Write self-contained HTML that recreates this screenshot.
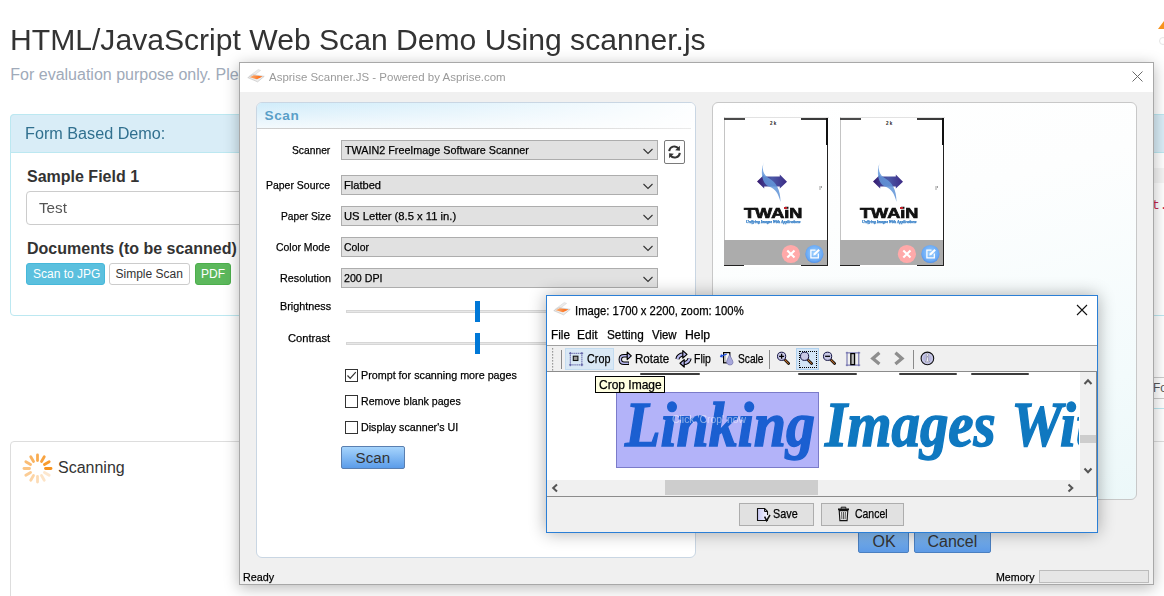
<!DOCTYPE html>
<html><head><meta charset="utf-8"><title>Web Scan Demo</title>
<style>
html,body{margin:0;padding:0;}
body{width:1164px;height:596px;position:relative;overflow:hidden;background:#fff;font-family:'Liberation Sans',sans-serif;}
.a{position:absolute;box-sizing:border-box;}
.t{position:absolute;white-space:nowrap;}
svg.a{overflow:visible;}
</style></head><body>

<div class="t" style="left:9.790776593430497px;top:25.00px;font-size:30.0px;line-height:30.0px;color:#333;font-family:'Liberation Sans';transform:scale(1.0038,1);transform-origin:0 25px;">HTML/JavaScript Web Scan Demo Using scanner.js</div>
<div class="t" style="left:10.3px;top:67.00px;font-size:16.0px;line-height:16.0px;color:#a0aab9;font-family:'Liberation Sans';">For evaluation purpose only. Please contact us for a license.</div>
<div class="a" style="left:10px;top:114px;width:1300px;height:202px;border:1px solid #bce8f1;border-radius:4px;background:#fff;"></div>
<div class="a" style="left:10px;top:114px;width:1300px;height:39px;border:1px solid #bce8f1;border-radius:4px 4px 0 0;background:#d9edf7;"></div>
<div class="t" style="left:25.2051206592113px;top:126.00px;font-size:16.0px;line-height:16.0px;color:#31708f;font-family:'Liberation Sans';transform:scale(1.0116,1);transform-origin:0 13px;">Form Based Demo:</div>
<div class="t" style="left:27px;top:169.00px;font-size:16px;line-height:16px;color:#333;font-family:'Liberation Sans';font-weight:bold;">Sample Field 1</div>
<div class="a" style="left:26px;top:191px;width:600px;height:34px;border:1px solid #ccc;border-radius:4px;background:#fff;"></div>
<div class="t" style="left:38.895290858725765px;top:201.00px;font-size:14.0px;line-height:14.0px;color:#555;font-family:'Liberation Sans';transform:scale(1.0882,1);transform-origin:0 12px;">Test</div>
<div class="t" style="left:27px;top:241.00px;font-size:16px;line-height:16px;color:#333;font-family:'Liberation Sans';font-weight:bold;">Documents (to be scanned)</div>
<div class="a" style="left:26px;top:263px;width:79px;height:22px;background:#5bc0de;border:1px solid #46b8da;border-radius:3px;"></div>
<div class="t" style="left:33px;top:268.00px;font-size:12px;line-height:12px;color:#fff;font-family:'Liberation Sans';">Scan to JPG</div>
<div class="a" style="left:109px;top:263px;width:81px;height:22px;background:#fff;border:1px solid #ccc;border-radius:3px;"></div>
<div class="t" style="left:115.5px;top:268.00px;font-size:12px;line-height:12px;color:#333;font-family:'Liberation Sans';">Simple Scan</div>
<div class="a" style="left:195px;top:263px;width:36px;height:22px;background:#5cb85c;border:1px solid #4cae4c;border-radius:3px;"></div>
<div class="t" style="left:201px;top:268.00px;font-size:12px;line-height:12px;color:#fff;font-family:'Liberation Sans';">PDF</div>
<div class="a" style="left:10px;top:441px;width:1300px;height:200px;border:1px solid #ddd;border-radius:4px;background:#fff;"></div>
<svg class="a" style="left:22.9px;top:453.8px;" width="29" height="29" viewBox="0 0 29 29"><line x1="22.50" y1="14.50" x2="28.00" y2="14.50" stroke="#f7931e" stroke-opacity="1.00" stroke-width="2.8" stroke-linecap="round"/><line x1="21.43" y1="10.50" x2="26.19" y2="7.75" stroke="#f7931e" stroke-opacity="0.93" stroke-width="2.8" stroke-linecap="round"/><line x1="18.50" y1="7.57" x2="21.25" y2="2.81" stroke="#f7931e" stroke-opacity="0.85" stroke-width="2.8" stroke-linecap="round"/><line x1="14.50" y1="6.50" x2="14.50" y2="1.00" stroke="#f7931e" stroke-opacity="0.78" stroke-width="2.8" stroke-linecap="round"/><line x1="10.50" y1="7.57" x2="7.75" y2="2.81" stroke="#f7931e" stroke-opacity="0.70" stroke-width="2.8" stroke-linecap="round"/><line x1="7.57" y1="10.50" x2="2.81" y2="7.75" stroke="#f7931e" stroke-opacity="0.62" stroke-width="2.8" stroke-linecap="round"/><line x1="6.50" y1="14.50" x2="1.00" y2="14.50" stroke="#f7931e" stroke-opacity="0.55" stroke-width="2.8" stroke-linecap="round"/><line x1="7.57" y1="18.50" x2="2.81" y2="21.25" stroke="#f7931e" stroke-opacity="0.47" stroke-width="2.8" stroke-linecap="round"/><line x1="10.50" y1="21.43" x2="7.75" y2="26.19" stroke="#f7931e" stroke-opacity="0.40" stroke-width="2.8" stroke-linecap="round"/><line x1="14.50" y1="22.50" x2="14.50" y2="28.00" stroke="#f7931e" stroke-opacity="0.33" stroke-width="2.8" stroke-linecap="round"/><line x1="18.50" y1="21.43" x2="21.25" y2="26.19" stroke="#f7931e" stroke-opacity="0.25" stroke-width="2.8" stroke-linecap="round"/><line x1="21.43" y1="18.50" x2="26.19" y2="21.25" stroke="#f7931e" stroke-opacity="0.22" stroke-width="2.8" stroke-linecap="round"/></svg>
<div class="t" style="left:58px;top:460.00px;font-size:16px;line-height:16px;color:#333;font-family:'Liberation Sans';">Scanning</div>
<div class="a" style="left:1154px;top:114px;width:20px;height:39px;background:#d9edf7;border-top:1px solid #bce8f1;border-bottom:1px solid #bce8f1;"></div>
<div class="a" style="left:1154px;top:168px;width:20px;height:15px;background:#f5f5f5;"></div>
<div class="t" style="left:1152px;top:199.00px;font-size:13px;line-height:13px;color:#c7254e;font-family:'Liberation Mono';">t.</div>
<div class="a" style="left:1154px;top:377px;width:20px;height:1px;background:#ccc;"></div>
<div class="a" style="left:1154px;top:398px;width:20px;height:1px;background:#ccc;"></div>
<div class="t" style="left:1153px;top:382.00px;font-size:12px;line-height:12px;color:#555;font-family:'Liberation Sans';">Fo</div>
<div class="a" style="left:1154px;top:408px;width:20px;height:1px;background:#bce8f1;"></div>
<svg class="a" style="left:1157px;top:20px;" width="8" height="10" viewBox="0 0 8 10"><path d="M1 9 L7 9 L7 1 Z" fill="#f7931e"/></svg>
<svg class="a" style="left:1158px;top:37px;" width="8" height="8" viewBox="0 0 8 8"><circle cx="5" cy="4" r="3.5" fill="none" stroke="#e5e5e5"/></svg>
<div class="a" style="left:239px;top:62px;width:915px;height:523px;border:1px solid #a8a8a8;background:#f0f0f0;box-shadow:0 3px 14px rgba(0,0,0,0.28);"></div>
<div class="a" style="left:240px;top:63px;width:913px;height:29px;background:#fff;"></div>
<svg class="a" style="left:244px;top:66px;" width="24" height="22" viewBox="0 0 24 22"><defs><linearGradient id="og1" x1="0" x2="1"><stop offset="0" stop-color="#f9b27a"/><stop offset="1" stop-color="#ff5e00"/></linearGradient></defs><path d="M5.2 10.2 L14.2 3.6 L16.6 4.4 L8.2 10.8 Z" fill="#ececec" stroke="#d6d6d6" stroke-width="0.6"/><path d="M3.8 11.6 L9 8.6 L20.2 10.4 L13.6 15.8 Z" fill="#eeeeee" stroke="#c4c4c4" stroke-width="0.7"/><path d="M5.6 11.2 L9.6 9.2 L18.6 10.4 L13 13.2 Z" fill="url(#og1)"/></svg>
<div class="t" style="left:269.3px;top:72.00px;font-size:11.8px;line-height:11.8px;color:#9a9a9a;font-family:'Liberation Sans';transform:scale(0.9728,1);transform-origin:0 9px;">Asprise Scanner.JS - Powered by Asprise.com</div>
<svg class="a" style="left:1131px;top:70px;" width="13" height="13" viewBox="0 0 13 13"><path d="M1.5 1.5 L11.5 11.5 M11.5 1.5 L1.5 11.5" stroke="#6a6a6a" stroke-width="1"/></svg>
<div class="a" style="left:256px;top:102px;width:440px;height:456px;border:1px solid #c9d6e3;border-radius:6px;background:#fff;overflow:hidden;"></div>
<div class="a" style="left:257px;top:103px;width:438px;height:26px;background:linear-gradient(90deg,rgba(255,255,255,0) 0%,rgba(255,255,255,0.35) 45%,rgba(255,255,255,0.95) 100%),linear-gradient(#d0ecfa,#f5fafd);border-radius:5px 5px 0 0;"></div>
<div class="a" style="left:257px;top:128px;width:434px;height:1px;background:linear-gradient(90deg,#cdcdcd,#d6d6d6 60%,#eaeaea);"></div>
<div class="t" style="left:264.5px;top:109.00px;font-size:13.6px;line-height:13.6px;color:#5a9fc8;font-family:'Liberation Sans';font-weight:bold;letter-spacing:0.6px;">Scan</div>
<div class="t" style="left:291.93770491803275px;top:145.00px;font-size:11.5px;line-height:11.5px;color:#000;font-family:'Liberation Sans';transform:scale(0.8933,1);transform-origin:0 9px;-webkit-text-stroke:0.25px #000;">Scanner</div>
<div class="a" style="left:341px;top:140px;width:317px;height:20px;background:#e1e1e1;border:1px solid #adadad;"></div>
<div class="t" style="left:344.5848049281314px;top:145.00px;font-size:11.5px;line-height:11.5px;color:#000;font-family:'Liberation Sans';transform:scale(0.9356,1);transform-origin:0 9px;-webkit-text-stroke:0.25px #000;">TWAIN2 FreeImage Software Scanner</div>
<svg class="a" style="left:642px;top:148px;" width="12" height="7" viewBox="0 0 12 7"><path d="M1.5 1 L6 5.5 L10.5 1" fill="none" stroke="#333" stroke-width="1.1"/></svg>
<div class="t" style="left:266.4626043405676px;top:180.00px;font-size:11.5px;line-height:11.5px;color:#000;font-family:'Liberation Sans';transform:scale(0.9102,1);transform-origin:0 9px;-webkit-text-stroke:0.25px #000;">Paper Source</div>
<div class="a" style="left:341px;top:175px;width:317px;height:20px;background:#e1e1e1;border:1px solid #adadad;"></div>
<div class="t" style="left:343.91222570532915px;top:180.00px;font-size:11.5px;line-height:11.5px;color:#000;font-family:'Liberation Sans';transform:scale(0.9650,1);transform-origin:0 9px;-webkit-text-stroke:0.25px #000;">Flatbed</div>
<svg class="a" style="left:642px;top:183px;" width="12" height="7" viewBox="0 0 12 7"><path d="M1.5 1 L6 5.5 L10.5 1" fill="none" stroke="#333" stroke-width="1.1"/></svg>
<div class="t" style="left:280.5840503672613px;top:211.00px;font-size:11.5px;line-height:11.5px;color:#000;font-family:'Liberation Sans';transform:scale(0.8869,1);transform-origin:0 9px;-webkit-text-stroke:0.25px #000;">Paper Size</div>
<div class="a" style="left:341px;top:206px;width:317px;height:20px;background:#e1e1e1;border:1px solid #adadad;"></div>
<div class="t" style="left:343.9571065989848px;top:211.00px;font-size:11.5px;line-height:11.5px;color:#000;font-family:'Liberation Sans';transform:scale(0.9773,1);transform-origin:0 9px;-webkit-text-stroke:0.25px #000;">US Letter (8.5 x 11 in.)</div>
<svg class="a" style="left:642px;top:214px;" width="12" height="7" viewBox="0 0 12 7"><path d="M1.5 1 L6 5.5 L10.5 1" fill="none" stroke="#333" stroke-width="1.1"/></svg>
<div class="t" style="left:276.4778325123153px;top:242.00px;font-size:11.5px;line-height:11.5px;color:#000;font-family:'Liberation Sans';transform:scale(0.9081,1);transform-origin:0 9px;-webkit-text-stroke:0.25px #000;">Color Mode</div>
<div class="a" style="left:341px;top:237px;width:317px;height:20px;background:#e1e1e1;border:1px solid #adadad;"></div>
<div class="t" style="left:344.2784482758621px;top:242.00px;font-size:11.5px;line-height:11.5px;color:#000;font-family:'Liberation Sans';transform:scale(0.9070,1);transform-origin:0 9px;-webkit-text-stroke:0.25px #000;">Color</div>
<svg class="a" style="left:642px;top:245px;" width="12" height="7" viewBox="0 0 12 7"><path d="M1.5 1 L6 5.5 L10.5 1" fill="none" stroke="#333" stroke-width="1.1"/></svg>
<div class="t" style="left:279.73711790393014px;top:273.00px;font-size:11.5px;line-height:11.5px;color:#000;font-family:'Liberation Sans';transform:scale(0.9379,1);transform-origin:0 9px;-webkit-text-stroke:0.25px #000;">Resolution</div>
<div class="a" style="left:341px;top:268px;width:317px;height:20px;background:#e1e1e1;border:1px solid #adadad;"></div>
<div class="t" style="left:344.26685878962536px;top:273.00px;font-size:11.5px;line-height:11.5px;color:#000;font-family:'Liberation Sans';transform:scale(0.9272,1);transform-origin:0 9px;-webkit-text-stroke:0.25px #000;">200 DPI</div>
<svg class="a" style="left:642px;top:276px;" width="12" height="7" viewBox="0 0 12 7"><path d="M1.5 1 L6 5.5 L10.5 1" fill="none" stroke="#333" stroke-width="1.1"/></svg>
<div class="a" style="left:664px;top:140px;width:21px;height:24px;background:#fdfdfd;border:1px solid #7a7a7a;border-radius:2px;"></div>
<svg class="a" style="left:666px;top:144px;" width="17" height="16" viewBox="0 0 17 16"><path d="M3.2 7.2 A5.2 5.2 0 0 1 12.6 4.6" fill="none" stroke="#333" stroke-width="2"/><path d="M13.9 1.8 L13.9 6.8 L9.2 6.2 Z" fill="#333"/><path d="M13.8 8.8 A5.2 5.2 0 0 1 4.4 11.4" fill="none" stroke="#333" stroke-width="2"/><path d="M3.1 14.2 L3.1 9.2 L7.8 9.8 Z" fill="#333"/></svg>
<div class="t" style="left:279.6357917570499px;top:301.00px;font-size:11.5px;line-height:11.5px;color:#000;font-family:'Liberation Sans';transform:scale(0.9394,1);transform-origin:0 9px;-webkit-text-stroke:0.25px #000;">Brightness</div>
<div class="t" style="left:288.2422043010753px;top:333.00px;font-size:11.5px;line-height:11.5px;color:#000;font-family:'Liberation Sans';transform:scale(0.9701,1);transform-origin:0 9px;-webkit-text-stroke:0.25px #000;">Contrast</div>
<div class="a" style="left:346px;top:310px;width:360px;height:3px;background:#e7e7e7;border:1px solid #d6d6d6;"></div>
<div class="a" style="left:346px;top:342px;width:360px;height:3px;background:#e7e7e7;border:1px solid #d6d6d6;"></div>
<div class="a" style="left:475px;top:301px;width:5px;height:21px;background:#0078d7;"></div>
<div class="a" style="left:475px;top:333px;width:5px;height:21px;background:#0078d7;"></div>
<div class="a" style="left:345px;top:369px;width:13px;height:13px;background:#fff;border:1px solid #333;"></div>
<div class="t" style="left:360.84025703369224px;top:370.00px;font-size:11.5px;line-height:11.5px;color:#000;font-family:'Liberation Sans';transform:scale(0.9345,1);transform-origin:0 9px;-webkit-text-stroke:0.25px #000;">Prompt for scanning more pages</div>
<div class="a" style="left:345px;top:395px;width:13px;height:13px;background:#fff;border:1px solid #333;"></div>
<div class="t" style="left:360.8508620689655px;top:396.00px;font-size:11.5px;line-height:11.5px;color:#000;font-family:'Liberation Sans';transform:scale(0.9230,1);transform-origin:0 9px;-webkit-text-stroke:0.25px #000;">Remove blank pages</div>
<div class="a" style="left:345px;top:421px;width:13px;height:13px;background:#fff;border:1px solid #333;"></div>
<div class="t" style="left:360.84343434343435px;top:422.00px;font-size:11.5px;line-height:11.5px;color:#000;font-family:'Liberation Sans';transform:scale(0.9310,1);transform-origin:0 9px;-webkit-text-stroke:0.25px #000;">Display scanner's UI</div>
<svg class="a" style="left:345px;top:369px;" width="13" height="13" viewBox="0 0 13 13"><path d="M2.5 6.5 L5.2 9.4 L10.8 3.2" fill="none" stroke="#333" stroke-width="1.2"/></svg>
<div class="a" style="left:341px;top:446px;width:64px;height:23px;background:linear-gradient(#a6d4fc,#5b9ce9);border:1px solid #5a7fb0;border-radius:2px;"></div>
<div class="t" style="left:355.5px;top:450.00px;font-size:15.2px;line-height:15.2px;color:#333;font-family:'Liberation Sans';">Scan</div>
<div class="a" style="left:712px;top:102px;width:425px;height:398px;border:1px solid #c8c8c8;border-radius:6px;background:linear-gradient(165deg,#ffffff 0%,#fdfefe 30%,#f3fbfc 75%,#ecf8f9 100%);"></div>
<div class="a" style="left:723.5px;top:117.5px;width:105px;height:149px;background:#fff;"></div>
<div class="a" style="left:723.5px;top:117px;width:105px;height:1px;background:#e2e2e2;"></div>
<div class="a" style="left:723.5px;top:117px;width:1px;height:149px;background:#c4c4c4;"></div>
<div class="a" style="left:724.0px;top:118px;width:21px;height:1.5px;background:#4a4a4a;"></div>
<div class="a" style="left:801.0px;top:118px;width:27px;height:1.5px;background:#3a3a3a;"></div>
<div class="a" style="left:826.3px;top:118px;width:2px;height:27px;background:#111;"></div>
<div class="a" style="left:826.7px;top:145px;width:1.6px;height:121px;background:#222;"></div>
<div class="a" style="left:724.0px;top:239.8px;width:103px;height:25.5px;background:#acacac;"></div>
<div class="a" style="left:724.0px;top:265px;width:20px;height:1.3px;background:#222;"></div>
<div class="a" style="left:801.0px;top:265px;width:27px;height:1.3px;background:#222;"></div>
<svg class="a" style="left:753.5px;top:159px;" width="36" height="46" viewBox="0 0 36 46"><defs><linearGradient id="ag" x1="0" x2="1" y1="0" y2="0"><stop offset="0" stop-color="#35186e"/><stop offset="0.5" stop-color="#4b5aa8"/><stop offset="1" stop-color="#3d2a85"/></linearGradient><linearGradient id="sg" x1="0" x2="0" y1="0" y2="1"><stop offset="0" stop-color="#6b9fe0"/><stop offset="1" stop-color="#5b8fd4"/></linearGradient></defs><path d="M3 22.5 L10.2 15.5 L10.2 17.6 L25.8 17.6 L25.8 15.5 L33 22.8 L25.8 29.6 L25.8 27.5 L10.2 27.5 L10.2 29.5 Z" fill="url(#ag)"/><path d="M10 3 C7.5 10 9 16 15.5 19.5 C22 23.5 26.5 30 26.5 43 C24.5 35 21.5 29.5 15 27.5 C8.5 25 5.5 14 10 3 Z" fill="url(#sg)" opacity="0.85"/></svg>
<div class="t" style="left:743.818759936407px;top:206.00px;font-size:14.0px;line-height:14.0px;color:#111;font-family:'Liberation Sans';font-weight:bold;-webkit-text-stroke:0.7px #111;transform:scale(1.2946,1);transform-origin:0 12px;">TWAiN</div>
<div class="a" style="left:783.5px;top:206.5px;width:3.5px;height:2.5px;background:#c0202a;"></div>
<div class="t" style="left:746.3996871741398px;top:220.00px;font-size:4.5px;line-height:4.5px;color:#2a78c4;font-family:'Liberation Serif';font-weight:bold;font-style:italic;-webkit-text-stroke:0.25px #2a78c4;transform:scale(0.8342,1);transform-origin:0 3px;">Unifying Images With Applications</div>
<div class="t" style="left:770.0px;top:122.00px;font-size:4.5px;line-height:4.5px;color:#222;font-family:'Liberation Sans';font-weight:bold;">2 k</div>
<svg class="a" style="left:818.5px;top:185px;" width="4" height="6" viewBox="0 0 4 6"><path d="M1 1 L1 5 M2.5 1 L2.5 3" stroke="#777" stroke-width="0.7"/></svg>
<svg class="a" style="left:781.0px;top:244.9px;" width="20" height="20" viewBox="0 0 20 20"><circle cx="9.9" cy="9" r="9.1" fill="#ffa9a9"/><path d="M6.3 5.4 L13.5 12.6 M13.5 5.4 L6.3 12.6" stroke="#fff" stroke-width="2.1"/></svg>
<svg class="a" style="left:804.5px;top:244.9px;" width="20" height="20" viewBox="0 0 20 20"><defs><radialGradient id="bg1" cx="0.5" cy="0.45" r="0.55"><stop offset="0" stop-color="#9fd2ff"/><stop offset="0.8" stop-color="#6aaaf6"/><stop offset="1" stop-color="#4f8ee8"/></radialGradient></defs><circle cx="9.4" cy="9" r="9.1" fill="url(#bg1)"/><path d="M10.5 5.2 L5.9 5.2 L5.9 12.8 L13.3 12.8 L13.3 8.5" fill="none" stroke="#fff" stroke-width="1.3"/><path d="M8.3 10.6 L8.7 8.5 L13.4 3.9 L14.9 5.4 L10.3 10.1 Z" fill="#fff"/></svg>
<div class="a" style="left:839.5px;top:117.5px;width:105px;height:149px;background:#fff;"></div>
<div class="a" style="left:839.5px;top:117px;width:105px;height:1px;background:#e2e2e2;"></div>
<div class="a" style="left:839.5px;top:117px;width:1px;height:149px;background:#c4c4c4;"></div>
<div class="a" style="left:840.0px;top:118px;width:21px;height:1.5px;background:#4a4a4a;"></div>
<div class="a" style="left:917.0px;top:118px;width:27px;height:1.5px;background:#3a3a3a;"></div>
<div class="a" style="left:942.3px;top:118px;width:2px;height:27px;background:#111;"></div>
<div class="a" style="left:942.7px;top:145px;width:1.6px;height:121px;background:#222;"></div>
<div class="a" style="left:840.0px;top:239.8px;width:103px;height:25.5px;background:#acacac;"></div>
<div class="a" style="left:840.0px;top:265px;width:20px;height:1.3px;background:#222;"></div>
<div class="a" style="left:917.0px;top:265px;width:27px;height:1.3px;background:#222;"></div>
<svg class="a" style="left:869.5px;top:159px;" width="36" height="46" viewBox="0 0 36 46"><defs><linearGradient id="ag" x1="0" x2="1" y1="0" y2="0"><stop offset="0" stop-color="#35186e"/><stop offset="0.5" stop-color="#4b5aa8"/><stop offset="1" stop-color="#3d2a85"/></linearGradient><linearGradient id="sg" x1="0" x2="0" y1="0" y2="1"><stop offset="0" stop-color="#6b9fe0"/><stop offset="1" stop-color="#5b8fd4"/></linearGradient></defs><path d="M3 22.5 L10.2 15.5 L10.2 17.6 L25.8 17.6 L25.8 15.5 L33 22.8 L25.8 29.6 L25.8 27.5 L10.2 27.5 L10.2 29.5 Z" fill="url(#ag)"/><path d="M10 3 C7.5 10 9 16 15.5 19.5 C22 23.5 26.5 30 26.5 43 C24.5 35 21.5 29.5 15 27.5 C8.5 25 5.5 14 10 3 Z" fill="url(#sg)" opacity="0.85"/></svg>
<div class="t" style="left:859.818759936407px;top:206.00px;font-size:14.0px;line-height:14.0px;color:#111;font-family:'Liberation Sans';font-weight:bold;-webkit-text-stroke:0.7px #111;transform:scale(1.2946,1);transform-origin:0 12px;">TWAiN</div>
<div class="a" style="left:899.5px;top:206.5px;width:3.5px;height:2.5px;background:#c0202a;"></div>
<div class="t" style="left:862.3996871741398px;top:220.00px;font-size:4.5px;line-height:4.5px;color:#2a78c4;font-family:'Liberation Serif';font-weight:bold;font-style:italic;-webkit-text-stroke:0.25px #2a78c4;transform:scale(0.8342,1);transform-origin:0 3px;">Unifying Images With Applications</div>
<div class="t" style="left:886.0px;top:122.00px;font-size:4.5px;line-height:4.5px;color:#222;font-family:'Liberation Sans';font-weight:bold;">2 k</div>
<svg class="a" style="left:934.5px;top:185px;" width="4" height="6" viewBox="0 0 4 6"><path d="M1 1 L1 5 M2.5 1 L2.5 3" stroke="#777" stroke-width="0.7"/></svg>
<svg class="a" style="left:897.0px;top:244.9px;" width="20" height="20" viewBox="0 0 20 20"><circle cx="9.9" cy="9" r="9.1" fill="#ffa9a9"/><path d="M6.3 5.4 L13.5 12.6 M13.5 5.4 L6.3 12.6" stroke="#fff" stroke-width="2.1"/></svg>
<svg class="a" style="left:920.5px;top:244.9px;" width="20" height="20" viewBox="0 0 20 20"><defs><radialGradient id="bg1" cx="0.5" cy="0.45" r="0.55"><stop offset="0" stop-color="#9fd2ff"/><stop offset="0.8" stop-color="#6aaaf6"/><stop offset="1" stop-color="#4f8ee8"/></radialGradient></defs><circle cx="9.4" cy="9" r="9.1" fill="url(#bg1)"/><path d="M10.5 5.2 L5.9 5.2 L5.9 12.8 L13.3 12.8 L13.3 8.5" fill="none" stroke="#fff" stroke-width="1.3"/><path d="M8.3 10.6 L8.7 8.5 L13.4 3.9 L14.9 5.4 L10.3 10.1 Z" fill="#fff"/></svg>
<div class="a" style="left:858px;top:530px;width:51px;height:23px;background:linear-gradient(#86bdf2,#5d9ae6);border:1px solid #4a7fc0;border-radius:2px;"></div>
<div class="t" style="left:872.5px;top:534.00px;font-size:16px;line-height:16px;color:#333;font-family:'Liberation Sans';">OK</div>
<div class="a" style="left:914px;top:530px;width:77px;height:23px;background:linear-gradient(#86bdf2,#5d9ae6);border:1px solid #4a7fc0;border-radius:2px;"></div>
<div class="t" style="left:927.5px;top:534.00px;font-size:16px;line-height:16px;color:#333;font-family:'Liberation Sans';">Cancel</div>
<div class="t" style="left:242.8373665480427px;top:572.00px;font-size:11.5px;line-height:11.5px;color:#000;font-family:'Liberation Sans';transform:scale(0.9376,1);transform-origin:0 9px;-webkit-text-stroke:0.25px #000;">Ready</div>
<div class="t" style="left:995.7478753541077px;top:572.00px;font-size:11.5px;line-height:11.5px;color:#000;font-family:'Liberation Sans';transform:scale(0.9262,1);transform-origin:0 9px;-webkit-text-stroke:0.25px #000;">Memory</div>
<div class="a" style="left:1039px;top:570px;width:110px;height:13px;background:#e6e6e6;border:1px solid #bcbcbc;"></div>
<div class="a" style="left:546px;top:295px;width:552px;height:238px;border:1px solid #2b7fd6;background:#f0f0f0;box-shadow:0 0 16px rgba(0,0,0,0.32);"></div>
<div class="a" style="left:547px;top:296px;width:550px;height:49px;background:#fff;"></div>
<div class="a" style="left:547px;top:345px;width:550px;height:1px;background:#a0a0a0;"></div>
<svg class="a" style="left:550px;top:299px;" width="24" height="22" viewBox="0 0 24 22"><defs><linearGradient id="og2" x1="0" x2="1"><stop offset="0" stop-color="#f9b27a"/><stop offset="1" stop-color="#ff5e00"/></linearGradient></defs><path d="M5.2 10.2 L14.2 3.6 L16.6 4.4 L8.2 10.8 Z" fill="#ececec" stroke="#d6d6d6" stroke-width="0.6"/><path d="M3.8 11.6 L9 8.6 L20.2 10.4 L13.6 15.8 Z" fill="#eeeeee" stroke="#c4c4c4" stroke-width="0.7"/><path d="M5.6 11.2 L9.6 9.2 L18.6 10.4 L13 13.2 Z" fill="url(#og2)"/></svg>
<div class="t" style="left:575.4840863115306px;top:306.00px;font-size:11.9px;line-height:11.9px;color:#000;font-family:'Liberation Sans';transform:scale(0.9486,1);transform-origin:0 9px;-webkit-text-stroke:0.25px #000;">Image: 1700 x 2200, zoom: 100%</div>
<svg class="a" style="left:1076px;top:304px;" width="12" height="12" viewBox="0 0 12 12"><path d="M1 1 L11 11 M11 1 L1 11" stroke="#111" stroke-width="1.1"/></svg>
<div class="t" style="left:550.657239057239px;top:330.00px;font-size:11.9px;line-height:11.9px;color:#000;font-family:'Liberation Sans';transform:scale(0.9903,1);transform-origin:0 9px;-webkit-text-stroke:0.25px #000;">File</div>
<div class="t" style="left:577.2409785932722px;top:330.00px;font-size:11.9px;line-height:11.9px;color:#000;font-family:'Liberation Sans';transform:scale(1.0074,1);transform-origin:0 9px;-webkit-text-stroke:0.25px #000;">Edit</div>
<div class="t" style="left:606.6690000000001px;top:330.00px;font-size:11.9px;line-height:11.9px;color:#000;font-family:'Liberation Sans';transform:scale(0.9916,1);transform-origin:0 9px;-webkit-text-stroke:0.25px #000;">Setting</div>
<div class="t" style="left:652.3428904428904px;top:330.00px;font-size:11.9px;line-height:11.9px;color:#000;font-family:'Liberation Sans';transform:scale(0.9598,1);transform-origin:0 9px;-webkit-text-stroke:0.25px #000;">View</div>
<div class="t" style="left:684.9201550387596px;top:330.00px;font-size:11.9px;line-height:11.9px;color:#000;font-family:'Liberation Sans';transform:scale(1.0292,1);transform-origin:0 9px;-webkit-text-stroke:0.25px #000;">Help</div>
<svg class="a" style="left:551px;top:347px;" width="4" height="24" viewBox="0 0 4 24"><rect x="1" y="1" width="1.2" height="1.6" fill="#9a9a9a"/><rect x="1" y="4" width="1.2" height="1.6" fill="#9a9a9a"/><rect x="1" y="7" width="1.2" height="1.6" fill="#9a9a9a"/><rect x="1" y="10" width="1.2" height="1.6" fill="#9a9a9a"/><rect x="1" y="13" width="1.2" height="1.6" fill="#9a9a9a"/><rect x="1" y="16" width="1.2" height="1.6" fill="#9a9a9a"/><rect x="1" y="19" width="1.2" height="1.6" fill="#9a9a9a"/><rect x="1" y="22" width="1.2" height="1.6" fill="#9a9a9a"/></svg>
<div class="a" style="left:561px;top:350px;width:1px;height:19px;background:#8a8a8a;"></div>
<div class="a" style="left:565px;top:348px;width:49px;height:22px;background:#d9e8f5;border:1px solid #c4dcf0;"></div>
<svg class="a" style="left:568px;top:351px;" width="16" height="16" viewBox="0 0 16 16"><rect x="2.3" y="2.3" width="11.6" height="11.6" fill="none" stroke="#6262a6" stroke-width="1" stroke-dasharray="1.4 0.5"/><path d="M1 2.3 L3.3 2.3 M2.3 1 L2.3 3.3 M12.9 2.3 L15.2 2.3 M13.9 1 L13.9 3.3 M1 13.9 L3.3 13.9 M2.3 12.9 L2.3 15.2 M12.9 13.9 L15.2 13.9 M13.9 12.9 L13.9 15.2" stroke="#6262a6" stroke-width="1"/><rect x="5.3" y="5.2" width="4.6" height="4.3" fill="#9a9a9a" stroke="#111" stroke-width="1.1"/></svg>
<div class="t" style="left:587.0602409638554px;top:354.00px;font-size:11.9px;line-height:11.9px;color:#000;font-family:'Liberation Sans';transform:scale(0.9072,1);transform-origin:0 9px;-webkit-text-stroke:0.25px #000;">Crop</div>
<svg class="a" style="left:615px;top:348px;" width="20" height="22" viewBox="0 0 20 22"><path d="M13.5 7.8 L9 7.8 Q5.3 7.8 5.3 11.5 Q5.3 15.3 9 15.3 L14 15.3" fill="none" stroke="#000" stroke-width="3.4" stroke-linejoin="round"/><path d="M13.5 7.8 L9 7.8 Q5.3 7.8 5.3 11.5 Q5.3 15.3 9 15.3 L13.6 15.3" fill="none" stroke="#b9b9f0" stroke-width="1.5"/><path d="M12.2 4.2 L16.3 7.9 L12.2 11.6 Z" fill="#b9b9f0" stroke="#000" stroke-width="1.2" stroke-linejoin="round"/></svg>
<div class="t" style="left:635.3723404255319px;top:354.00px;font-size:11.9px;line-height:11.9px;color:#000;font-family:'Liberation Sans';transform:scale(0.9744,1);transform-origin:0 9px;-webkit-text-stroke:0.25px #000;">Rotate</div>
<svg class="a" style="left:672px;top:348px;" width="20" height="22" viewBox="0 0 20 22"><path d="M5.4 11.2 Q6.2 6.8 11.6 6.4" fill="none" stroke="#000" stroke-width="4.2"/><path d="M5.4 11.2 Q6.2 6.8 11.6 6.4" fill="none" stroke="#b9b9f0" stroke-width="2.2"/><path d="M10.8 2.6 L15 6.4 L10.8 10 Z" fill="#b9b9f0" stroke="#000" stroke-width="1.2" stroke-linejoin="round"/><path d="M17.6 10.4 Q16.8 14.8 11.4 15.2" fill="none" stroke="#000" stroke-width="4.2"/><path d="M17.6 10.4 Q16.8 14.8 11.4 15.2" fill="none" stroke="#b9b9f0" stroke-width="2.2"/><path d="M12.2 11.6 L8 15.2 L12.2 19 Z" fill="#b9b9f0" stroke="#000" stroke-width="1.2" stroke-linejoin="round"/></svg>
<div class="t" style="left:694.3624161073826px;top:354.00px;font-size:11.9px;line-height:11.9px;color:#000;font-family:'Liberation Sans';transform:scale(0.8798,1);transform-origin:0 9px;-webkit-text-stroke:0.25px #000;">Flip</div>
<svg class="a" style="left:718px;top:348px;" width="18" height="20" viewBox="0 0 18 20"><rect x="5.6" y="4.6" width="6.2" height="10.2" fill="#f4f4f4" stroke="#000" stroke-width="1.2"/><path d="M7 6 L7 14" stroke="#b0b0b0" stroke-width="1.4"/><path d="M11.6 6.6 C10.2 10 8.2 12.8 8.6 14.8 Q9.6 17 12 17 Q14.6 17 15 14.8 C15.2 12.8 13 10 11.6 6.6 Z" fill="#a8a8dc" stroke="#7070a8" stroke-width="0.7"/><path d="M8.8 6 L3.2 8.2" stroke="#1f4fe0" stroke-width="1.3"/><path d="M1.8 9 L3.2 5.8 L5 9.6 Z" fill="#1f4fe0"/></svg>
<div class="t" style="left:738.240663900415px;top:354.00px;font-size:11.9px;line-height:11.9px;color:#000;font-family:'Liberation Sans';transform:scale(0.8578,1);transform-origin:0 9px;-webkit-text-stroke:0.25px #000;">Scale</div>
<div class="a" style="left:769px;top:350px;width:1px;height:19px;background:#8a8a8a;"></div>
<div class="a" style="left:796px;top:348px;width:23px;height:22px;background:#d3e5f6;border:1px solid #b0d2f0;"></div>
<div class="a" style="left:799px;top:351px;width:17.5px;height:17px;border:1px dotted #000;"></div>
<svg class="a" style="left:0;top:0;" width="1164" height="596"><path d="M784.2 359.1 L788.6 363.5" stroke="#000" stroke-width="2.7" stroke-linecap="round"/><path d="M784.6 359.5 L788.4 363.3" stroke="#b86a2a" stroke-width="1.1" stroke-linecap="round"/><circle cx="781.6" cy="356.3" r="4.1" fill="#c8c8e6" stroke="#111140" stroke-width="1.0"/><path d="M779.1 356.3 L784.1 356.3 M781.6 353.8 L781.6 358.8" stroke="#000" stroke-width="1.3"/></svg>
<svg class="a" style="left:0;top:0;" width="1164" height="596"><path d="M807.2 359.1 L811.6 363.5" stroke="#000" stroke-width="2.7" stroke-linecap="round"/><path d="M807.6 359.5 L811.4 363.3" stroke="#b86a2a" stroke-width="1.1" stroke-linecap="round"/><circle cx="804.6" cy="356.3" r="4.1" fill="#c8c8e6" stroke="#111140" stroke-width="1.0"/></svg>
<svg class="a" style="left:0;top:0;" width="1164" height="596"><path d="M830.2 359.1 L834.6 363.5" stroke="#000" stroke-width="2.7" stroke-linecap="round"/><path d="M830.6 359.5 L834.4 363.3" stroke="#b86a2a" stroke-width="1.1" stroke-linecap="round"/><circle cx="827.6" cy="356.3" r="4.1" fill="#c8c8e6" stroke="#111140" stroke-width="1.0"/><path d="M825.1 356.3 L830.1 356.3" stroke="#000" stroke-width="1.3"/></svg>
<svg class="a" style="left:845px;top:351px;" width="16" height="16" viewBox="0 0 16 16"><path d="M0.8 1.9 L15.2 1.9 M0.8 14.1 L15.2 14.1 M2 0.8 L2 15.2 M13.8 0.8 L13.8 15.2" stroke="#6262a6" stroke-width="1"/><rect x="5.8" y="2.6" width="3.8" height="11" fill="#a0a0a0" stroke="#000" stroke-width="1.2"/><path d="M7.7 3.5 L7.7 12.8" stroke="#d0d0d0" stroke-width="0.8"/></svg>
<svg class="a" style="left:868px;top:350px;" width="14" height="18" viewBox="0 0 14 18"><path d="M11.4 2.8 L4.8 8.4 L11.4 14" fill="none" stroke="#8e8e8e" stroke-width="3.3"/></svg>
<svg class="a" style="left:892px;top:350px;" width="14" height="18" viewBox="0 0 14 18"><path d="M3.4 2.8 L10 8.4 L3.4 14" fill="none" stroke="#8e8e8e" stroke-width="3.3"/></svg>
<div class="a" style="left:913px;top:350px;width:1px;height:19px;background:#8a8a8a;"></div>
<svg class="a" style="left:919px;top:350px;" width="17" height="17" viewBox="0 0 17 17"><circle cx="8.4" cy="8.4" r="6.3" fill="#b8b8de" stroke="#111" stroke-width="1.1"/><circle cx="8.4" cy="8.4" r="4.8" fill="none" stroke="#d4d4ee" stroke-width="0.8"/><circle cx="8.4" cy="5" r="1.2" fill="#f4f4ff" stroke="#666" stroke-width="0.4"/><path d="M7.7 6.8 L9.1 6.8 L9.4 10.4 L10.6 11.8 L6.2 11.8 L7.4 10.4 Z" fill="#f4f4ff" stroke="#666" stroke-width="0.4"/></svg>
<div class="a" style="left:547px;top:371px;width:550px;height:1px;background:#8c8c8c;"></div>
<div class="a" style="left:547px;top:372px;width:533px;height:108px;background:#fff;"></div>
<div class="a" style="left:640px;top:372.6px;width:60px;height:2.2px;background:#3c3c3c;filter:blur(0.5px);border-radius:1px;"></div>
<div class="a" style="left:798px;top:372.6px;width:59px;height:2.2px;background:#3c3c3c;filter:blur(0.5px);border-radius:1px;"></div>
<div class="a" style="left:899px;top:372.6px;width:58px;height:2.2px;background:#3c3c3c;filter:blur(0.5px);border-radius:1px;"></div>
<div class="a" style="left:971px;top:372.6px;width:58px;height:2.2px;background:#3c3c3c;filter:blur(0.5px);border-radius:1px;"></div>
<div class="a" style="left:616px;top:392px;width:203px;height:76px;background:#b3b3f9;border:1px solid #7b7bc9;"></div>
<div class="t" style="left:624.7898773006135px;top:398.00px;font-size:57.0px;line-height:57.0px;color:#1b5fd1;font-family:'Liberation Serif';font-weight:bold;font-style:italic;-webkit-text-stroke:1.3px #1b5fd1;transform:scale(1.0171,1.1);transform-origin:0 48px;">Linking</div>
<div class="a" style="left:820px;top:380px;width:259px;height:95px;overflow:hidden;">
<div class="t" style="left:4.969127516778523px;top:18.00px;font-size:57.0px;line-height:57.0px;color:#0f78c0;font-family:'Liberation Serif';font-weight:bold;font-style:italic;-webkit-text-stroke:1.3px #0f78c0;transform:scale(0.9985,1.1);transform-origin:0 48px;">Images</div>
<div class="t" style="left:191.5px;top:18.00px;font-size:57.0px;line-height:57.0px;color:#0f78c0;font-family:'Liberation Serif';font-weight:bold;font-style:italic;-webkit-text-stroke:1.3px #0f78c0;transform:scale(1.0000,1.1);transform-origin:0 48px;">Wit</div>
</div>
<div class="t" style="left:672.2787535410764px;top:415.00px;font-size:10px;line-height:10px;color:rgba(255,255,255,0.5);font-family:'Liberation Sans';transform:scale(1.0425,1);transform-origin:0 8px;">Click 'Crop' now</div>
<div class="a" style="left:595px;top:376px;width:70px;height:17px;background:#ffffe1;border:1px solid #000;"></div>
<div class="t" style="left:598.7996101364522px;top:380.00px;font-size:11.9px;line-height:11.9px;color:#000;font-family:'Liberation Sans';transform:scale(1.0091,1);transform-origin:0 9px;-webkit-text-stroke:0.25px #000;">Crop Image</div>
<div class="a" style="left:547px;top:480px;width:533px;height:16px;background:#f0f0f0;"></div>
<div class="a" style="left:665px;top:480px;width:153px;height:15px;background:#cdcdcd;"></div>
<svg class="a" style="left:550px;top:483px;" width="10" height="10" viewBox="0 0 10 10"><path d="M7 1.5 L3.2 5 L7 8.5" fill="none" stroke="#555" stroke-width="2"/></svg>
<svg class="a" style="left:1065px;top:483px;" width="10" height="10" viewBox="0 0 10 10"><path d="M3.5 1.5 L7.3 5 L3.5 8.5" fill="none" stroke="#555" stroke-width="2"/></svg>
<div class="a" style="left:1080px;top:372px;width:16px;height:124px;background:#f0f0f0;"></div>
<div class="a" style="left:1080px;top:435px;width:16px;height:8px;background:#cdcdcd;"></div>
<svg class="a" style="left:1083px;top:377px;" width="10" height="10" viewBox="0 0 10 10"><path d="M1.5 7 L5 3.2 L8.5 7" fill="none" stroke="#555" stroke-width="2"/></svg>
<svg class="a" style="left:1083px;top:465px;" width="10" height="10" viewBox="0 0 10 10"><path d="M1.5 3.5 L5 7.3 L8.5 3.5" fill="none" stroke="#555" stroke-width="2"/></svg>
<div class="a" style="left:547px;top:496px;width:550px;height:1px;background:#8c8c8c;"></div>
<div class="a" style="left:1096px;top:372px;width:1px;height:125px;background:#8c8c8c;"></div>
<div class="a" style="left:739px;top:503px;width:75px;height:23px;background:#e1e1e1;border:1px solid #adadad;"></div>
<svg class="a" style="left:755px;top:506px;" width="17" height="17" viewBox="0 0 17 17"><defs><linearGradient id="sv" x1="0" x2="1"><stop offset="0" stop-color="#c8c8f4"/><stop offset="1" stop-color="#f4f4ff"/></linearGradient></defs><path d="M2.5 2.5 L9.5 2.5 L12.5 5.5 L12.5 14.5 L2.5 14.5 Z" fill="url(#sv)"/><path d="M12.5 9 L12.5 5.5 L9.5 2.5 L2.5 2.5 L2.5 14.5 L12.5 14.5 L12.5 13" fill="none" stroke="#111" stroke-width="1.1" stroke-linejoin="round"/><path d="M9.5 2.5 L9.5 5.5 L12.5 5.5" fill="none" stroke="#111" stroke-width="1"/><path d="M9.6 10.6 L11.6 14.6 L15 9" fill="none" stroke="#111" stroke-width="1.5"/></svg>
<div class="t" style="left:773.1130136986302px;top:509.00px;font-size:11.9px;line-height:11.9px;color:#000;font-family:'Liberation Sans';transform:scale(0.9094,1);transform-origin:0 9px;-webkit-text-stroke:0.25px #000;">Save</div>
<div class="a" style="left:821px;top:503px;width:83px;height:23px;background:#e1e1e1;border:1px solid #adadad;"></div>
<svg class="a" style="left:836px;top:506px;" width="15" height="16" viewBox="0 0 15 16"><path d="M2 3.3 L13 3.3" stroke="#111" stroke-width="1.7"/><path d="M5.2 2.6 L5.2 1.2 L9.8 1.2 L9.8 2.6" fill="none" stroke="#111" stroke-width="1"/><path d="M3.2 4.6 L3.9 14.6 L11.1 14.6 L11.8 4.6 Z" fill="#e8e8e8" stroke="#111" stroke-width="1.1"/><path d="M5.6 6 L5.9 13.2 M7.5 6 L7.5 13.2 M9.4 6 L9.1 13.2" stroke="#555" stroke-width="1"/></svg>
<div class="t" style="left:855.1774624373957px;top:509.00px;font-size:11.9px;line-height:11.9px;color:#000;font-family:'Liberation Sans';transform:scale(0.8782,1);transform-origin:0 9px;-webkit-text-stroke:0.25px #000;">Cancel</div>
</body></html>
